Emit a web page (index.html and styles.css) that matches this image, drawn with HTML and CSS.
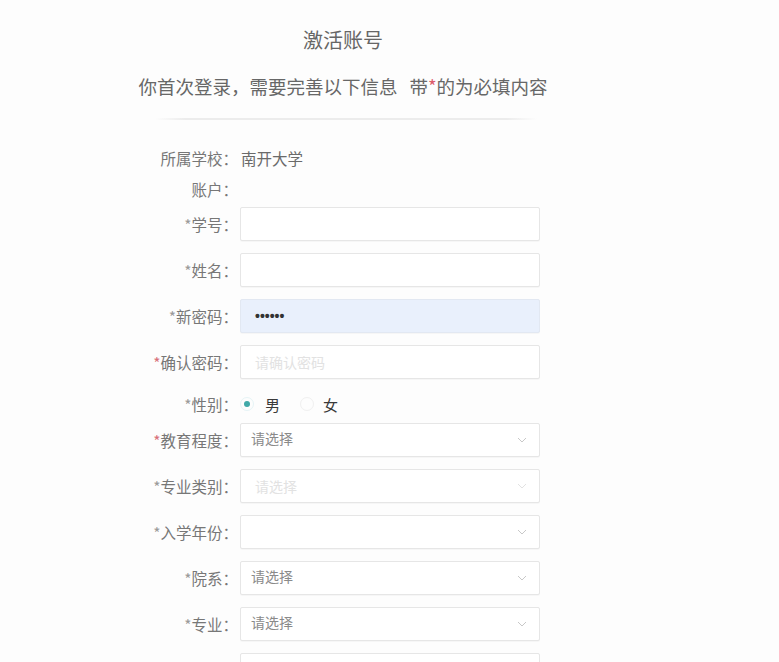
FILE: index.html
```html
<!DOCTYPE html>
<html lang="zh-CN">
<head>
<meta charset="utf-8">
<title>激活账号</title>
<link rel="stylesheet" href="styles.css">
</head>
<body>
<main class="panel">
  <h1 class="title">激活账号</h1>
  <p class="subtitle">你首次登录，需要完善以下信息<span class="gap"></span>带<span class="star">*</span>的为必填内容</p>
  <div class="divider"></div>
  <form class="form">
    <div class="info-row"><span class="label">所属学校：</span><span class="value">南开大学</span></div>
    <div class="info-row"><span class="label">账户：</span><span class="value"></span></div>

    <div class="field"><label class="label"><span class="ast">*</span>学号：</label><input class="input" type="text"></div>
    <div class="field"><label class="label"><span class="ast">*</span>姓名：</label><input class="input" type="text"></div>
    <div class="field"><label class="label"><span class="ast">*</span>新密码：</label><div class="input filled"><span class="dots">••••••</span></div></div>
    <div class="field"><label class="label"><span class="ast red">*</span>确认密码：</label><div class="input"><span class="ghost">请确认密码</span></div></div>

    <div class="field radio-row">
      <span class="label"><span class="ast">*</span>性别：</span>
      <div class="radios">
        <span class="radio checked"></span><span class="radio-text">男</span>
        <span class="radio"></span><span class="radio-text">女</span>
      </div>
    </div>

    <div class="field"><label class="label"><span class="ast red">*</span>教育程度：</label><div class="input select"><span class="ph">请选择</span><svg class="chev" viewBox="0 0 10 6"><path d="M1 1l4 4 4-4"/></svg></div></div>
    <div class="field"><label class="label"><span class="ast">*</span>专业类别：</label><div class="input select"><span class="ghost">请选择</span><svg class="chev faint" viewBox="0 0 10 6"><path d="M1 1l4 4 4-4"/></svg></div></div>
    <div class="field"><label class="label"><span class="ast">*</span>入学年份：</label><div class="input select"><span class="ph"></span><svg class="chev" viewBox="0 0 10 6"><path d="M1 1l4 4 4-4"/></svg></div></div>
    <div class="field"><label class="label"><span class="ast">*</span>院系：</label><div class="input select"><span class="ph">请选择</span><svg class="chev" viewBox="0 0 10 6"><path d="M1 1l4 4 4-4"/></svg></div></div>
    <div class="field"><label class="label"><span class="ast">*</span>专业：</label><div class="input select"><span class="ph">请选择</span><svg class="chev" viewBox="0 0 10 6"><path d="M1 1l4 4 4-4"/></svg></div></div>
    <div class="field"><span class="label"></span><div class="input"></div></div>
  </form>
</main>
</body>
</html>
```

FILE: styles.css
```css
html, body {
  margin: 0;
  padding: 0;
  background: #fdfdfd;
  overflow: hidden;
  height: 662px;
}

body {
  font-family: "Noto Sans CJK SC", "Noto Sans", sans-serif;
  color: #666;
}

.panel {
  width: 410px;
  margin-left: 138px;
  padding-top: 26px;
}

.title {
  margin: 0;
  font-size: 20px;
  font-weight: 400;
  line-height: 28px;
  text-align: center;
  color: #666;
}

.subtitle {
  margin: 18px 0 0;
  font-size: 18.5px;
  line-height: 28px;
  text-align: center;
  color: #676767;
  white-space: nowrap;
}

.subtitle .gap {
  display: inline-block;
  width: 12px;
}

.star {
  color: #dc5a6a;
}

.divider {
  margin: 18px 0 0 17px;
  width: 382px;
  height: 2px;
  background: linear-gradient(to right, rgba(235,235,235,0), #ececec 8%, #ececec 92%, rgba(235,235,235,0));
}

.form {
  margin: 22px 0 0;
  display: flex;
  flex-direction: column;
}

.info-row {
  display: flex;
  align-items: center;
  gap: 3px;
  height: 31px;
  font-size: 15.5px;
}

.info-row:nth-child(2) {
  margin-bottom: 3px;
}

.label {
  width: 100px;
  flex: none;
  text-align: right;
  font-size: 15.5px;
  color: #777;
  white-space: nowrap;
}

.value {
  color: #6a6a6a;
}

.ast {
  color: #9a9a9a;
}

.ast.red {
  color: #d8707a;
}

.field {
  display: flex;
  align-items: center;
  gap: 2px;
  margin-bottom: 12px;
}

.input {
  box-sizing: border-box;
  width: 300px;
  height: 34px;
  border: 1px solid #e6e6e6;
  border-radius: 2px;
  background: #fff;
  font-family: inherit;
  font-size: 14px;
  padding: 0 10px;
  display: flex;
  align-items: center;
  box-shadow: 0 1px 1px rgba(0,0,0,0.03);
  outline: none;
}

.input.filled {
  background: #e9f0fc;
  border-color: #e2e8f2;
  padding-left: 14px;
}

.dots {
  font-family: "Liberation Sans", Arial, sans-serif;
  color: #333;
  font-size: 14px;
  font-weight: 700;
}

.ghost {
  color: #e2e2e2;
  padding-left: 4px;
}

.select {
  justify-content: space-between;
  padding-right: 12px;
}

.ph {
  color: #8a8a8a;
  margin-top: -5px;
}

.chev {
  width: 10px;
  height: 6px;
  fill: none;
  stroke: #c8c8c8;
  stroke-width: 1;
}

.chev.faint {
  stroke: #e2e2e2;
}

.radio-row {
  height: 26px;
  margin-bottom: 6px;
}

.radios {
  display: flex;
  align-items: center;
  font-size: 15px;
  color: #3a3a3a;
}

.radio {
  box-sizing: border-box;
  width: 14px;
  height: 14px;
  border-radius: 50%;
  border: 1px solid #f0f0f0;
  display: flex;
  align-items: center;
  justify-content: center;
}

.radio.checked {
  border-color: #e6f4f6;
}

.radio.checked::after {
  content: "";
  width: 6px;
  height: 6px;
  border-radius: 50%;
  background: #40a9a8;
}

.radio-text {
  margin-left: 11px;
  margin-right: 20px;
}

.radio-text + .radio + .radio-text {
  margin-left: 9px;
}
```
